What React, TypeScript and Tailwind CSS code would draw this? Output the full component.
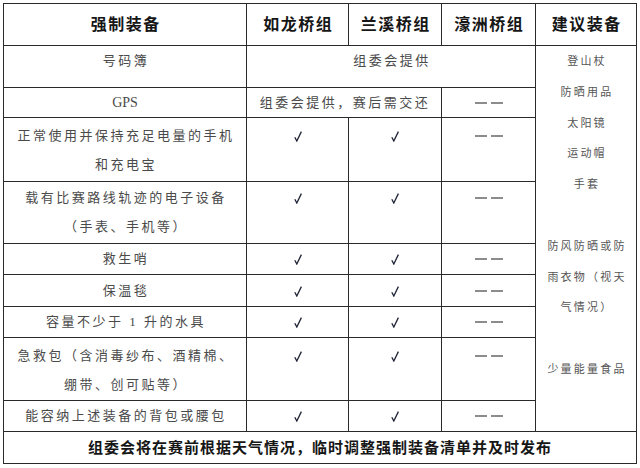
const serif = "font-['Liberation_Serif','Noto_Sans_CJK_SC',serif]";

const cell = "border border-[#2a2a2a] align-top text-center p-0";
const body = "text-[13px] leading-[30px] tracking-[2.5px] pl-[2px] text-[#4a4a4a]";

function Check() {
  return (
    <div className="h-[30px] flex items-center justify-center">
      <svg width="8" height="11" viewBox="0 0 8 11">
        <path d="M0.8 6.2 L2.8 10 L7.4 0.6" fill="none" stroke="#1f2436" strokeWidth="1.3" />
      </svg>
    </div>
  );
}

function Dash() {
  return (
    <div className="h-[30px] flex items-center justify-center gap-[4px] pl-[1px]">
      <div className="w-[12px] h-[2px] bg-[#8c8c8c]" />
      <div className="w-[12px] h-[2px] bg-[#8c8c8c]" />
    </div>
  );
}

const rows = [
  { h: "h-[64px]", pt: "pt-[3px]", label: ["正常使用并保持充足电量的手机", "和充电宝"] },
  { h: "h-[62px]", pt: "pt-[1px]", label: ["载有比赛路线轨迹的电子设备", "（手表、手机等）"] },
  { h: "h-[31px]", pt: "pt-[0px]", label: ["救生哨"] },
  { h: "h-[32px]", pt: "pt-[1px]", label: ["保温毯"] },
  { h: "h-[31px]", pt: "pt-[0px]", label: ["容量不少于 1 升的水具"] },
  { h: "h-[63px]", pt: "pt-[3px]", label: ["急救包（含消毒纱布、酒精棉、", "绷带、创可贴等）"] },
  { h: "h-[31px]", pt: "pt-[0px]", label: ["能容纳上述装备的背包或腰包"] },
];

const suggested = [
  "登山杖",
  "防晒用品",
  "太阳镜",
  "运动帽",
  "手套",
  "",
  "防风防晒或防",
  "雨衣物（视天",
  "气情况）",
  "",
  "少量能量食品",
];

export default function App() {
  return (
    <div className={`w-[640px] h-[468px] bg-white pt-[3px] pl-[3px] ${serif}`}>
      <table className="border-collapse table-fixed w-[634px] border-[1.5px] border-[#555] text-[13px] leading-[28px]">
        <colgroup>
          <col className="w-[243px]" />
          <col className="w-[102px]" />
          <col className="w-[93px]" />
          <col className="w-[94px]" />
          <col className="w-[101px]" />
        </colgroup>
        <tbody>
          {/* header */}
          <tr className="h-[42px]">
            {["强制装备", "如龙桥组", "兰溪桥组", "濠洲桥组", "建议装备"].map((t) => (
              <td
                key={t}
                className="border border-[#2a2a2a] align-middle text-center text-[16px] font-bold tracking-[1.5px] pl-[1.5px] text-[#161616]"
              >
                {t}
              </td>
            ))}
          </tr>

          <tr className="h-[42px]">
            <td className={`${cell} ${body}`}>
              <div className="h-[30px]">号码簿</div>
            </td>
            <td colSpan={3} className={`${cell} ${body}`}>
              <div className="h-[30px]">组委会提供</div>
            </td>
            <td rowSpan={9} className={`${cell} text-[11px] leading-[30.8px] tracking-[2.2px] pl-[2px] text-[#555]`}>
              {suggested.map((s, i) => (
                <div key={i} className="h-[30.8px]">
                  {s}
                </div>
              ))}
            </td>
          </tr>

          <tr className="h-[30px]">
            <td className={`${cell} text-[14px] leading-[30px] text-[#4a4a4a]`}>
              <div className="h-[29px]">GPS</div>
            </td>
            <td colSpan={2} className={`${cell} ${body}`}>
              <div className="h-[29px]">组委会提供，赛后需交还</div>
            </td>
            <td className={cell}>
              <div className="h-[29px] overflow-hidden">
                <Dash />
              </div>
            </td>
          </tr>

          {rows.map((r, i) => (
            <tr key={i} className={r.h}>
              <td className={`${cell} ${body} ${r.pt}`}>
                {r.label.map((l, j) => (
                  <div key={j} className="h-[29px] whitespace-pre">
                    {l}
                  </div>
                ))}
              </td>
              <td className={`${cell} ${r.pt}`}>
                <div className="h-[29px] overflow-hidden">
                  <Check />
                </div>
              </td>
              <td className={`${cell} ${r.pt}`}>
                <div className="h-[29px] overflow-hidden">
                  <Check />
                </div>
              </td>
              <td className={`${cell} ${r.pt}`}>
                <div className="h-[29px] overflow-hidden">
                  <Dash />
                </div>
              </td>
            </tr>
          ))}

          <tr className="h-[32px]">
            <td
              colSpan={5}
              className="border border-[#2a2a2a] align-middle text-center text-[15px] font-bold tracking-[1px] text-[#161616]"
            >
              组委会将在赛前根据天气情况，临时调整强制装备清单并及时发布
            </td>
          </tr>
        </tbody>
      </table>
    </div>
  );
}
